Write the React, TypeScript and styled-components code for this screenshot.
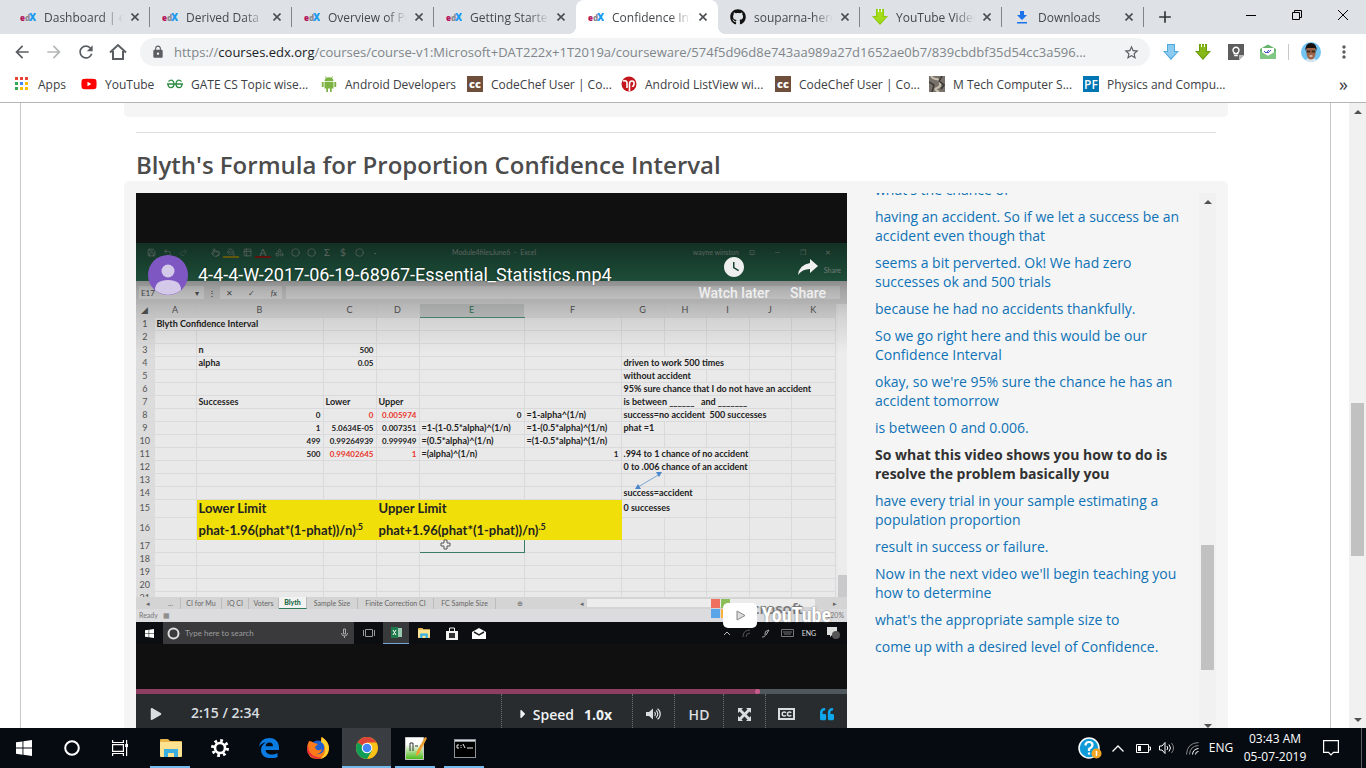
import React from "react";
import styled, { createGlobalStyle, css } from "styled-components";
import { MdArrowBack, MdArrowForward, MdRefresh, MdLock, MdStarBorder, MdMoreVert, MdAdd, MdWatchLater } from "react-icons/md";
import { FaGithub, FaYoutube, FaQuoteLeft, FaPlay, FaCaretRight } from "react-icons/fa";
import { Save, Undo2, Redo2, Pointer, PaintBucket, Table2, Shapes, Circle } from "lucide-react";

const ui = '"Open Sans", "Noto Sans", sans-serif';

const GlobalStyle = createGlobalStyle`
  * { box-sizing: border-box; }
  body { margin: 0; background: #fff; font-family: ${ui}; overflow: hidden; }
  button { border: 0; padding: 0; background: none; font: inherit; color: inherit; cursor: pointer; }
  a { color: inherit; text-decoration: none; }
  svg { display: block; flex: none; }
`;

const Screen = styled.div`
  display: flex;
  flex-direction: column;
  height: 100vh;
`;

/* ---------- browser chrome ---------- */

const TabStrip = styled.header`
  display: flex;
  height: 34px;
  padding-left: 8px;
  background: #dee1e6;
  flex: none;
`;

const Tab = styled.div<{ $active?: boolean; $line?: boolean }>`
  position: relative;
  display: flex;
  align-items: center;
  gap: 8px;
  flex: 0 1 142px;
  min-width: 0;
  padding: 0 11px 0 12px;
  color: #45494d;
  font-size: 12px;
  ${(p) => p.$line && css`
    &::after {
      content: "";
      position: absolute;
      right: 0;
      top: 7px;
      width: 1px;
      height: 20px;
      background: #808488;
    }
  `}
  ${(p) => p.$active && css`
    background: #fff;
    border-radius: 8px 8px 0 0;
    &::before, &::after {
      content: "";
      position: absolute;
      bottom: 0;
      width: 8px;
      height: 8px;
    }
    &::before { left: -8px; background: radial-gradient(circle at 0 0, #dee1e6 8px, #fff 8px); }
    &::after { right: -8px; background: radial-gradient(circle at 100% 0, #dee1e6 8px, #fff 8px); }
  `}
`;

const TabTitle = styled.span`
  flex: 1;
  min-width: 0;
  overflow: hidden;
  white-space: nowrap;
  mask-image: linear-gradient(90deg, #000 74%, transparent);
`;

const TabClose = styled.button`
  display: grid;
  place-items: center;
  width: 8px;
  height: 12px;
  color: #4b4f53;
`;

const NewTab = styled.button`
  width: 42px;
  display: grid;
  place-items: center;
  color: #333639;
  font-size: 20px;
`;

const WindowButtons = styled.div`
  display: flex;
  margin-left: auto;
  height: 29px;
`;

const WindowButton = styled.button`
  display: grid;
  place-items: center;
  width: 46px;
`;

const Toolbar = styled.nav`
  display: flex;
  align-items: center;
  height: 36px;
  padding: 0 12px 0 6px;
  flex: none;
  color: #5a5e62;
`;

const ToolButton = styled.button<{ $w?: number; $dim?: boolean }>`
  display: grid;
  place-items: center;
  width: ${(p) => p.$w ?? 32}px;
  height: 32px;
  font-size: 20px;
  flex: none;
  opacity: ${(p) => (p.$dim ? 0.45 : 1)};
`;

const AddressBox = styled.label`
  display: flex;
  align-items: center;
  flex: 1;
  min-width: 0;
  height: 28px;
  margin: 0 4px 0 6px;
  padding: 0 10px 0 11px;
  gap: 9px;
  border-radius: 14px;
  background: #f1f3f4;
  font-size: 13px;
`;

const Address = styled.span`
  flex: 1;
  min-width: 0;
  overflow: hidden;
  white-space: nowrap;
  color: #80868b;
  b { font-weight: 400; color: #202124; }
`;

const Rule = styled.span`
  width: 1px;
  height: 16px;
  margin: 0 12px 0 5px;
  background: #c6c9cc;
`;

const Bookmarks = styled.nav`
  display: flex;
  align-items: center;
  height: 33px;
  padding: 0 18px 4px 14px;
  border-bottom: 1px solid #b4b5b7;
  flex: none;
  font-size: 12px;
  color: #3c4043;
`;

const Bookmark = styled.a<{ $w: number }>`
  display: flex;
  align-items: center;
  gap: 8px;
  width: ${(p) => p.$w}px;
  flex: none;
  white-space: nowrap;
`;

const More = styled.button`
  margin-left: auto;
  font-size: 18px;
  line-height: 18px;
`;

/* ---------- course page ---------- */

const Viewport = styled.div`
  display: flex;
  flex: 1;
  min-height: 0;
  overflow: hidden;
`;

const Main = styled.main`
  flex: 1;
  min-width: 0;
  margin: 0 18px 0 20px;
  padding: 0 102px 0 103px;
  border: solid #c8c8c8;
  border-width: 0 1px;
`;

const PreviousBlock = styled.div`
  height: 14px;
  border-radius: 0 0 5px 5px;
  background: #f5f5f5;
`;

const Divider = styled.hr`
  height: 1px;
  margin: 15px 12px 16px;
  border: 0;
  background: #ddd;
`;

const Title = styled.h2`
  margin: 0 12px;
  font-size: 24px;
  line-height: 32px;
  font-weight: 600;
  color: #4c4c4c;
  white-space: nowrap;
`;

const VideoBlock = styled.section`
  display: flex;
  gap: 16px;
  padding: 12px;
  border-radius: 5px;
  background: #f5f5f5;
`;

const Player = styled.div`
  flex: 711 1 0;
  min-width: 0;
`;

const Stage = styled.div`
  position: relative;
  padding: 50px 0 45px;
  background: #101010;
  overflow: hidden;
`;

const Transcript = styled.aside`
  display: flex;
  flex: 353 1 0;
  min-width: 0;
  height: 541px;
  overflow: hidden;
`;

const Lines = styled.ol`
  flex: 1;
  margin: -13px 0 0;
  padding: 0 12px;
  list-style: none;
  font-size: 14px;
  line-height: 19px;
  color: #0e72b5;
`;

const Line = styled.li<{ $current?: boolean }>`
  margin-bottom: 8px;
  ${(p) => p.$current && css`
    color: #313131;
    font-weight: 700;
  `}
`;

const Track = styled.div`
  display: flex;
  flex-direction: column;
  align-items: center;
  width: 17px;
  flex: none;
  background: #f1f1f1;
`;

const Space = styled.span<{ $grow: number }>`
  flex: ${(p) => p.$grow} 1 0;
`;

const Gap = styled.span`
  width: 12px;
  flex: none;
`;

const Thumb = styled(Space)`
  width: 13px;
  background: #c1c1c1;
`;

const ArrowButton = styled.button`
  display: grid;
  place-items: center;
  width: 17px;
  height: 17px;
`;

/* ---------- player controls ---------- */

const Seek = styled.input`
  display: block;
  appearance: none;
  width: 100%;
  height: 5px;
  margin: 0;
  background: linear-gradient(90deg, #8e3e63 87%, #4f595d 87%);
  &::-webkit-slider-thumb {
    appearance: none;
    width: 5px;
    height: 5px;
    border-radius: 2px;
    background: #cb598d;
  }
`;

const Controls = styled.div`
  display: flex;
  height: 40px;
  background: #282c2e;
  color: #d8dee0;
  font-size: 14px;
  font-weight: 600;
`;

const Control = styled.button<{ $w: number; $line?: boolean; $color?: string }>`
  display: flex;
  align-items: center;
  justify-content: center;
  width: ${(p) => p.$w}px;
  flex: none;
  color: ${(p) => p.$color ?? "inherit"};
  border-left: ${(p) => (p.$line ? "1px dotted #6a6f72" : "0")};
`;

const Time = styled.span`
  flex: 1;
  padding-left: 15px;
  line-height: 38px;
`;

const Speed = styled(Control)`
  padding-right: 6px;
  font-weight: 700;
  color: #f0f3f4;
  gap: 3px;
  span { margin-right: 7px; font-weight: 600; }
`;

/* ---------- overlay of the embedded player ---------- */

const Shade = styled.div`
  position: absolute;
  inset: 50px 0 auto;
  height: 110px;
  background: linear-gradient(rgba(0,0,0,.6), rgba(0,0,0,.38) 36px, rgba(0,0,0,.24) 48px, rgba(0,0,0,.1) 75px, transparent);
`;

const ClipHeader = styled.div`
  position: absolute;
  inset: 62px 2px auto 12px;
  display: flex;
  font-family: Roboto, sans-serif;
  color: #f1f1f1;
`;

const ClipTitle = styled.a`
  flex: 1;
  margin-left: 10px;
  font-size: 18px;
  line-height: 40px;
  color: #fff;
  text-shadow: 0 0 2px rgba(0,0,0,.5);
  white-space: nowrap;
`;

const ClipAction = styled.button`
  display: flex;
  flex-direction: column;
  align-items: center;
  width: 74px;
  gap: 4px;
  font-size: 14px;
  font-weight: 500;
  line-height: 20px;
  color: #eee;
  white-space: nowrap;
`;

const Watermark = styled.a`
  position: absolute;
  right: 16px;
  bottom: 60px;
  display: flex;
  align-items: center;
  gap: 4px;
  color: #fff;
  font: 700 20px/28px "Liberation Sans Narrow", "Roboto Condensed", "Liberation Sans", sans-serif;
  text-shadow: 0 0 2px #666;
`;

const Sponsor = styled.div`
  position: absolute;
  right: 44px;
  bottom: 70px;
  display: flex;
  align-items: center;
  gap: 4px;
  color: #777;
  font: 600 15px/22px ${ui};
`;

/* ---------- recorded spreadsheet ---------- */

const Excel = styled.div`
  height: 401px;
  overflow: hidden;
  background: #e9e9e9;
  color: #222;
  font-family: Lato, sans-serif;
  font-size: 8px;
`;

const Ribbon = styled.div`
  height: 38px;
  background: #2e7a5a;
  color: #c3d4cc;
`;

const RibbonRow = styled.div`
  display: flex;
  align-items: center;
  height: 18px;
  padding: 0 6px 0 7px;
  white-space: nowrap;
  font-size: 7px;
`;

const QuickTools = styled.span`
  display: flex;
  width: 309px;
  font-size: 10px;
`;

const QuickTool = styled.span<{ $mark?: string }>`
  display: grid;
  place-items: center;
  width: 16px;
  height: 12px;
  box-shadow: ${(p) => (p.$mark ? `inset 0 -2px 0 -0px ${p.$mark}` : "none")};
  background-clip: content-box;
`;

const ClipWindowButtons = styled.span`
  display: flex;
  justify-content: space-around;
  width: 102px;
`;

const FormulaBar = styled.div`
  display: flex;
  align-items: center;
  gap: 4px;
  height: 23px;
  padding: 0 7px 0 3px;
  background: #d9d9d9;
`;

const Field = styled.span<{ $w?: number }>`
  display: flex;
  justify-content: space-between;
  align-items: center;
  width: ${(p) => (p.$w ? p.$w + "px" : "auto")};
  flex: ${(p) => (p.$w ? "none" : "1")};
  height: 13px;
  padding: 0 5px 0 2px;
  background: #ececec;
  color: #555;
`;

const SheetArea = styled.div`
  position: relative;
  display: flex;
  height: 293px;
  overflow: hidden;
`;

const Sheet = styled.table`
  flex: 1;
  width: 100%;
  table-layout: fixed;
  border-collapse: collapse;
  align-self: flex-start;
  th, td {
    height: 13px;
    padding: 0 2px;
    border: solid #dadadc;
    border-width: 0 1px 1px 0;
    line-height: 12px;
    white-space: nowrap;
    text-align: left;
    font-weight: 700;
    font-size: 9px;
  }
  th {
    padding: 0;
    background: #dcdcdc;
    color: #555;
    text-align: center;
    font-weight: 400;
  }
`;

const HeadCell = styled.th<{ $on?: boolean }>`
  && {
    height: 13px;
    ${(p) => p.$on && css`
      background: #c4c8c6;
      border-bottom: 1px solid #4f8f74;
      color: #2f7a58;
    `}
  }
`;

const Cell = styled.td<{ $right?: boolean; $red?: boolean; $big?: boolean; $selected?: boolean }>`
  && {
    ${(p) => p.$right && "text-align: right; font-size: 8px;"}
    ${(p) => p.$red && "color: #e8352b;"}
    ${(p) => p.$big && css`
      background: #f1df0a;
      border-color: #f1df0a;
      font-size: 13px;
      line-height: 17px;
      vertical-align: bottom;
    `}
    ${(p) => p.$selected && "border: 1px solid #3b7d63;"}
  }
  sup { font-size: 9px; line-height: 8px; }
`;

const SheetScroll = styled.div`
  width: 9px;
  margin-left: 2px;
  padding-bottom: 22px;
  background: #c9c9cb;
  span { display: block; height: 100%; background: #ececec; }
`;

const SheetOverlay = styled.svg`
  position: absolute;
  left: 300px;
  top: 165px;
`;

const SheetTabs = styled.div`
  display: flex;
  align-items: center;
  height: 12px;
  padding-left: 10px;
  background: #d4d4d4;
  color: #666;
  font-size: 7px;
  line-height: 11px;
  white-space: nowrap;
`;

const SheetTab = styled.span<{ $w: number; $on?: boolean }>`
  width: ${(p) => p.$w}px;
  flex: none;
  text-align: center;
  border-right: 1px solid #bcbcbc;
  ${(p) => p.$on && css`
    background: #f2f2f2;
    color: #1e6b48;
    font-weight: 900;
    border-bottom: 1px solid #2f7a58;
  `}
`;

const AddSheet = styled.span`
  width: 48px;
  text-align: center;
`;

const SheetSlider = styled.span`
  flex: 1;
  display: flex;
  align-items: center;
  gap: 3px;
  margin: 0 10px 0 36px;
  i { flex: 0 1 228px; height: 8px; background: #ececec; }
  span:last-child { margin-left: auto; }
`;

const Status = styled.div`
  display: flex;
  justify-content: space-between;
  height: 13px;
  padding: 0 3px;
  line-height: 13px;
  font-size: 7px;
  color: #777;
  background: #dcdcde;
`;

const ClipTaskbar = styled.div`
  display: flex;
  align-items: center;
  height: 22px;
  background: #0c0d11;
  color: #ddd;
`;

const ClipSearch = styled.span`
  display: flex;
  align-items: center;
  gap: 5px;
  width: 191px;
  height: 22px;
  padding: 0 6px 0 4px;
  background: #3a3a3c;
  color: #9c9c9c;
  span { flex: 1; }
`;

const ClipIcon = styled.span<{ $w: number; $on?: boolean }>`
  display: grid;
  place-items: center;
  width: ${(p) => p.$w}px;
  height: 22px;
  flex: none;
  font-size: 7px;
  ${(p) => p.$on && "background: #37393b; border-bottom: 1px solid #76a7d8;"}
`;

/* ---------- desktop task bar ---------- */

const Taskbar = styled.footer`
  display: flex;
  height: 40px;
  flex: none;
  background: #060b12;
  color: #fff;
`;

const TaskButton = styled.button<{ $w?: number; $open?: boolean; $active?: boolean }>`
  display: grid;
  place-items: center;
  align-content: center;
  position: relative;
  width: ${(p) => p.$w ?? 49}px;
  flex: none;
  ${(p) => p.$active && "background: #3a3d42;"}
  ${(p) => (p.$open || p.$active) && css`
    &::after {
      content: "";
      position: absolute;
      left: ${p.$active ? 0 : 4}px;
      right: ${p.$active ? 0 : 5}px;
      bottom: 0;
      height: 2px;
      background: #76b9ed;
    }
  `}
`;

const Apps = styled.div`
  display: flex;
  margin-left: 2px;
`;

const Tray = styled.div`
  display: flex;
  align-items: center;
  margin-left: auto;
  font-size: 12px;
`;

const TrayButton = styled.button<{ $w: number }>`
  display: grid;
  place-items: center;
  width: ${(p) => p.$w}px;
  height: 40px;
  line-height: 18px;
  white-space: nowrap;
`;

const ShowDesktop = styled.button`
  width: 5px;
  height: 40px;
  border-left: 1px solid #5b5f64;
`;

/* ---------- drawings ---------- */

const EdxIcon = () => (
  <svg width="16" height="16" viewBox="0 0 16 16" fontFamily="Open Sans, sans-serif" fontWeight="800">
    <text x="0" y="12" fontSize="8" fill="#b3145c">e</text>
    <text x="5" y="12" fontSize="8" fill="#8b8b90">d</text>
    <text x="9" y="12" fontSize="10" fill="#1d9bf0">X</text>
  </svg>
);

const CloseIcon = () => (
  <svg width="8" height="8" viewBox="0 0 8 8" stroke="currentColor" strokeWidth="1.600"><path d="m.5.5 7 7M7.500.5l-7 7" /></svg>
);

const DownArrow = ({ top, base, bar }: { top: string; base: string; bar?: boolean }) => (
  <svg width="16" height="16" viewBox="0 0 16 16">
    <path d="M4 0h8v7h4l-8 9-8-9h4z" fill={base} />
    <path d="M5 1h6v7h3l-6 6-6-6h3z" fill={top} />
    {bar && <path d="M6 0h1v3H6zM9 0h1v3H9z" fill="#fff" />}
  </svg>
);

const DownloadIcon = () => (
  <svg width="16" height="16" viewBox="0 0 16 16" fill="#1a73e8"><path d="M6 2h4v4h3l-5 5-5-5h3zM3 13h10v1.6H3z" /></svg>
);

const HomeIcon = () => (
  <svg width="18" height="18" viewBox="0 0 18 18" fill="none" stroke="currentColor" strokeWidth="2"><path d="M1 9.500 9 2l8 7.500M4 8v8h10V8" /></svg>
);

const AppsIcon = () => (
  <svg width="16" height="16" viewBox="0 0 16 16">
    {["#ea4335", "#ea4335", "#ea4335", "#34a853", "#4285f4", "#fbbc05", "#34a853", "#fbbc05", "#fbbc05"].map((c, i) => (
      <rect key={i} x={1 + (i % 3) * 5} y={1 + Math.floor(i / 3) * 5} width="3" height="3" fill={c} />
    ))}
  </svg>
);

const GeeksIcon = () => (
  <svg width="16" height="16" viewBox="0 0 16 16" fill="none" stroke="#2f8d46" strokeWidth="1.300">
    <path d="M0 8h16M1.500 5.500C4 3 7 4 7 8c0 4.500-5.500 5-6 .5M14.500 5.500C12 3 9 4 9 8c0 4.500 5.500 5 6 .5" />
  </svg>
);

const AndroidIcon = () => (
  <svg width="16" height="16" viewBox="0 0 16 16" fill="#7cb342">
    <path d="M3.500 5.200a4.500 4 0 0 1 9 0zM3.500 6h9v6.500h-1.800V16H9v-3.500H7V16H5.300v-3.500H3.500zM.8 6h1.900v5H.8zM13.300 6h1.900v5h-1.900z" />
    <path d="m4.500.5 1.200 2M11.500.5l-1.200 2" stroke="#7cb342" />
  </svg>
);

const ChefIcon = () => (
  <svg width="16" height="16" viewBox="0 0 16 16"><path d="M0 0h16v16H0z" fill="#6f4e3c" /><text x="8" y="12" textAnchor="middle" fill="#fff" fontFamily="Open Sans, sans-serif" fontWeight="800" fontSize="11">cc</text></svg>
);

const RedIcon = () => (
  <svg width="16" height="16" viewBox="0 0 16 16"><circle cx="8" cy="8" r="7.500" fill="#c4161c" /><path d="M2 5q4-1 4 2v5M8.500 15V8q0-3 2.500-3t2 3-2 2" fill="none" stroke="#fff" strokeWidth="1.600" /></svg>
);

const PhotoIcon = () => (
  <svg width="16" height="16" viewBox="0 0 16 16"><path d="M0 0h16v16H0z" fill="#77716a" /><path d="M2 0q2 3 5 3t4 4-3 5 2 4" fill="none" stroke="#c9bfae" strokeWidth="2" /><path d="M0 6l5 3-2 7M13 0l-3 5 5 4-3 4" fill="none" stroke="#3b3936" strokeWidth="1.500" /></svg>
);

const PfIcon = () => (
  <svg width="16" height="16" viewBox="0 0 16 16"><path d="M0 0h16v16H0z" fill="#0075b4" /><text x="8" y="13" textAnchor="middle" fill="#fff" fontFamily="Open Sans, sans-serif" fontWeight="600" fontSize="12">PF</text></svg>
);

const KeepIcon = () => (
  <svg width="16" height="16" viewBox="0 0 16 16"><path d="M0 0h16v11l-5 5H0z" fill="#5d5d5d" /><path d="M11 16v-5h5z" fill="#bbb" /><path d="M6.200 9.500V8.600a3 3 0 1 1 3.600 0v.9zM6.200 11.500h3.600" fill="none" stroke="#fff" strokeWidth="1.400" /></svg>
);

const MailIcon = () => (
  <svg width="16" height="16" viewBox="0 0 16 16"><path d="M0 5l8-4.500L16 5v9q0 1-1 1H1q-1 0-1-1z" fill="#68b36b" /><path d="M2 4h12v5l-6 3-6-3z" fill="#fff" /><path d="m4 7 2 2 3-3M7 8l1 1 3-3" fill="none" stroke="#4b54c4" /><path d="M0 7l8 5 8-5v7q0 1-1 1H1q-1 0-1-1z" fill="#81c784" /></svg>
);

const Avatar = () => (
  <svg width="20" height="20" viewBox="0 0 20 20"><defs><clipPath id="face"><circle cx="10" cy="10" r="10" /></clipPath></defs><g clipPath="url(#face)"><path d="M0 0h20v20H0z" fill="#72c5f2" /><path d="M3 20q2-4 7-4t7 4z" fill="#d9e6ee" /><path d="M5.500 6h9v6q-1 5.500-4.500 5.500T5.500 12z" fill="#9c6347" /><path d="M4.500 9Q4 1 10 1t5.500 8L14 6H6z" fill="#17120f" /><path d="M5.500 8.500h3.800v2H5.500zM10.700 8.500h3.800v2h-3.800z" fill="#3a2a24" /><path d="M8.500 14h3" stroke="#fff" /></g></svg>
);

const Triangle = ({ down }: { down?: boolean }) => (
  <svg width="8" height="4" viewBox="0 0 8 4"><path d={down ? "M0 0h8L4 4z" : "M4 0l4 4H0z"} fill="#505050" /></svg>
);

const WindowsLogo = ({ size = 16 }: { size?: number }) => (
  <svg width={size} height={size} viewBox="0 0 16 16" fill="#fff"><path d="M0 2.300 6.500 1.400v6.200H0zM7.400 1.200 16 0v7.600H7.400zM0 8.500h6.500v6.200L0 13.800zM7.400 8.500H16V16l-8.600-1.200z" /></svg>
);

const TaskViewIcon = () => (
  <svg width="16" height="16" viewBox="0 0 16 16" fill="none" stroke="#fff" strokeWidth="1.200"><path d="M.6 0v2.500h10.800V0M.6 16v-2.500h10.800V16M.6 4.600h10.800v6.800H.6zM14.600 0v16" /><path d="M13.200 4h2.800v3h-2.800z" fill="#fff" stroke="none" /></svg>
);

const FolderIcon = ({ size = 22 }: { size?: number }) => (
  <svg width={size} height={size} viewBox="0 0 22 22"><path d="M0 3q0-1 1-1h7l2 2h11q1 0 1 1v14H0z" fill="#e9b64a" /><path d="M0 5h22v14q0 1-1 1H1q-1 0-1-1z" fill="#fde391" /><path d="M4 20v-8h14v8h-4v-4H8v4z" fill="#3aaee0" /></svg>
);

const GearIcon = () => (
  <svg width="18" height="18" viewBox="0 0 18 18" fill="none" stroke="#fff"><circle cx="9" cy="9" r="5" strokeWidth="2.600" /><circle cx="9" cy="9" r="7.500" strokeWidth="3" strokeDasharray="2.700 3.190" /></svg>
);

const EdgeIcon = () => (
  <svg width="20" height="20" viewBox="0 0 20 20"><path d="M0 9C1 3 5 0 10.500 0 17 0 20 4.500 20 9.500V12H6.500c.3 3 3 4.500 6 4.500 2.200 0 4.200-.6 6-1.600v4c-2 1-4.300 1.400-6.700 1.400C6 20.300 2 17 2 12c0-3.500 2-6.200 5-7.500C4 4.600 1.500 6 0 9zm6.600-.8H14C14 6 12.800 4.500 10.500 4.500S6.900 6 6.600 8.200z" fill="#0a7be0" /></svg>
);

const FirefoxIcon = () => (
  <svg width="22" height="22" viewBox="0 0 22 22"><circle cx="11" cy="11.500" r="8" fill="#1f5fd0" /><path d="M2 4Q5 4 7 6l4 1-3 3q1 4 5 3l2-1q-1 5-6 5 7 1 8-5 1-5-3-8V0q8 4 8 11.500Q21.500 22 11 22T0 12Q0 8 2 4z" fill="#ff7a18" /><path d="M15 0q7 5 7 12-1 8-9 10 6-5 5-11-.5-4-4-6z" fill="#ffd02e" /><path d="M1 8q0 10 9 12 3 1 6 0-4 3-9 1Q0 18 0 12z" fill="#e8273f" /></svg>
);

const ChromeIcon = () => (
  <svg width="22" height="22" viewBox="0 0 22 22"><circle cx="11" cy="11" r="11" fill="#fbc116" /><path d="M11 11 1.500 5.500A11 11 0 0 1 20.500 5.500H11z" fill="#db4437" /><path d="M11 11 1.500 5.500A11 11 0 0 0 11 22l5-8.500z" fill="#0f9d58" /><circle cx="11" cy="11" r="5.300" fill="#fff" /><circle cx="11" cy="11" r="4.300" fill="#4285f4" /></svg>
);

const NotepadIcon = () => (
  <svg width="22" height="24" viewBox="0 0 22 24"><defs><linearGradient id="page" x2="0" y2="1"><stop offset=".3" stopColor="#fff" /><stop offset="1" stopColor="#48b812" /></linearGradient></defs><path d="M.5 1.500h18v22H.5z" fill="url(#page)" stroke="#c9c9c9" /><path d="M5 15V7h3v8M10 10h3M15 10h2" stroke="#333" fill="none" /><path d="m20 1 2 1-8 16-3 2 .5-4z" fill="#eda030" /></svg>
);

const TerminalIcon = () => (
  <svg width="22" height="19" viewBox="0 0 22 19"><path d="M0 0h22v19H0z" fill="#8e9499" /><path d="M1 3h20v15H1z" fill="#000" /><path d="M1 1h20v1H1z" fill="#d9dde0" /><path d="M5 6H3v3h2M7 6v1M7 8v1M9 5l2 4M13 9h6" stroke="#eee" fill="none" /></svg>
);

const VolumeIcon = () => (
  <svg width="15" height="12" viewBox="0 0 15 12"><path d="M0 4h3l4-3.500v11L3 8H0z" fill="currentColor" /><path d="M8.500 4.200a2.200 2.200 0 0 1 0 3.600M10 2.500a4.300 4.300 0 0 1 0 7M11.500.7a6.500 6.500 0 0 1 0 10.600" stroke="currentColor" fill="none" strokeWidth="1.200" /></svg>
);

const ExpandIcon = () => (
  <svg width="13" height="13" viewBox="0 0 13 13" fill="currentColor"><path d="M0 0h5L3.500 1.500l3 3 3-3L8 0h5v5l-1.500-1.500-3 3 3 3L13 8v5H8l1.500-1.500-3-3-3 3L5 13H0V8l1.500 1.500 3-3-3-3L0 5z" /></svg>
);

const CaptionIcon = () => (
  <svg width="17" height="12" viewBox="0 0 17 12" fill="none" stroke="currentColor"><path d="M1 1h15v10H1z" strokeWidth="2" /><path d="M8 4.800Q7.200 4 6.200 4 4.200 4 4.200 6t2 2q1 0 1.800-.8M13.300 4.800q-.8-.8-1.800-.8-2 0-2 2t2 2q1 0 1.800-.8" strokeWidth="1.500" /></svg>
);

const ShareArrow = () => (
  <svg width="20" height="24" viewBox="0 -2 20 24"><path d="M12 2l8 7-8 7v-4Q4 12 0 18q1-10 12-12z" fill="#f1f1f1" /></svg>
);

const UserCircle = () => (
  <svg width="40" height="40" viewBox="0 0 40 40"><circle cx="20" cy="20" r="20" fill="#7e57c2" /><circle cx="20" cy="16" r="6.500" fill="#d5c9ea" /><path d="M7 35q0-10 13-10t13 10a20 20 0 0 1-26 0z" fill="#d5c9ea" /></svg>
);

/* ---------- content ---------- */

const tabs = [
  { title: "Dashboard | edX", icon: <EdxIcon />, line: true },
  { title: "Derived Data | Derived", icon: <EdxIcon />, line: true },
  { title: "Overview of Power", icon: <EdxIcon />, line: true },
  { title: "Getting Started", icon: <EdxIcon /> },
  { title: "Confidence Interval", icon: <EdxIcon />, active: true },
  { title: "souparna-here", icon: <FaGithub size={16} color="#111" />, line: true },
  { title: "YouTube Video", icon: <DownArrow top="#a4dc1c" base="#8bc90c" bar />, line: true },
  { title: "Downloads", icon: <DownloadIcon />, line: true },
];

const bookmarks = [
  { w: 67, text: "Apps", icon: <AppsIcon /> },
  { w: 86, text: "YouTube", icon: <FaYoutube size={16} color="#f00" /> },
  { w: 154, text: "GATE CS Topic wise...", icon: <GeeksIcon /> },
  { w: 146, text: "Android Developers", icon: <AndroidIcon /> },
  { w: 154, text: "CodeChef User | Co...", icon: <ChefIcon /> },
  { w: 154, text: "Android ListView wi...", icon: <RedIcon /> },
  { w: 154, text: "CodeChef User | Co...", icon: <ChefIcon /> },
  { w: 154, text: "M Tech Computer S...", icon: <PhotoIcon /> },
  { w: 150, text: "Physics and Compu...", icon: <PfIcon /> },
];

const captions = [
  "what's the chance of",
  "having an accident. So if we let a success be an accident even though that",
  "seems a bit perverted. Ok! We had zero successes ok and 500 trials",
  "because he had no accidents thankfully.",
  "So we go right here and this would be our Confidence Interval",
  "okay, so we're 95% sure the chance he has an accident tomorrow",
  "is between 0 and 0.006.",
  "So what this video shows you how to do is resolve the problem basically you",
  "have every trial in your sample estimating a population proportion",
  "result in success or failure.",
  "Now in the next video we'll begin teaching you how to determine",
  "what's the appropriate sample size to",
  "come up with a desired level of Confidence.",
];
const currentCaption = 7;

const letters = "ABCDEFGHIJK".split("");
const columnWidths = [18, 42, 127, 53, 43, 105, 97, 43, 42, 43, 42];

type CellData = { c: string; t: React.ReactNode; span?: number; right?: boolean; red?: boolean; big?: boolean; selected?: boolean };
const r = (c: string, t: string, red = false): CellData => ({ c, t, right: true, red });

const sheet: Record<number, CellData[]> = {
  1: [{ c: "A", t: "Blyth Confidence Interval", span: 2 }],
  3: [{ c: "B", t: "n" }, r("C", "500")],
  4: [{ c: "B", t: "alpha" }, r("C", "0.05"), { c: "G", t: "driven to work 500 times", span: 3 }],
  5: [{ c: "G", t: "without accident", span: 2 }],
  6: [{ c: "G", t: "95% sure chance that I do not have an accident", span: 5 }],
  7: [{ c: "B", t: "Successes" }, { c: "C", t: "Lower" }, { c: "D", t: "Upper" }, { c: "G", t: "is between ______ \u00a0 and _______", span: 4 }],
  8: [r("B", "0"), r("C", "0", true), r("D", "0.005974", true), r("E", "0"), { c: "F", t: "=1-alpha^(1/n)" }, { c: "G", t: "success=no accident \u00a0500 successes", span: 4 }],
  9: [r("B", "1"), r("C", "5.0634E-05"), r("D", "0.007351"), { c: "E", t: "=1-(1-0.5*alpha)^(1/n)" }, { c: "F", t: "=1-(0.5*alpha)^(1/n)" }, { c: "G", t: "phat =1" }],
  10: [r("B", "499"), r("C", "0.99264939"), r("D", "0.999949"), { c: "E", t: "=(0.5*alpha)^(1/n)" }, { c: "F", t: "=(1-0.5*alpha)^(1/n)" }],
  11: [r("B", "500"), r("C", "0.99402645", true), r("D", "1", true), { c: "E", t: "=(alpha)^(1/n)" }, r("F", "1"), { c: "G", t: ".994 to 1 chance of no accident", span: 3 }],
  12: [{ c: "G", t: "0 to .006 chance of an accident", span: 3 }],
  14: [{ c: "G", t: "success=accident", span: 2 }],
  15: [{ c: "B", t: "Lower Limit", span: 2, big: true }, { c: "D", t: "Upper Limit", span: 3, big: true }, { c: "G", t: "0 successes", span: 2 }],
  16: [{ c: "B", t: <>phat-1.96(phat*(1-phat))/n)<sup>.5</sup></>, span: 2, big: true }, { c: "D", t: <>phat+1.96(phat*(1-phat))/n)<sup>.5</sup></>, span: 3, big: true }],
  17: [{ c: "E", t: "", selected: true }],
};

const rowHeight = (n: number) => (n === 15 ? 18 : n === 16 ? 22 : 13);

function SheetRow({ n }: { n: number }) {
  const cells: React.ReactNode[] = [];
  for (let i = 0; i < letters.length; ) {
    const d = sheet[n]?.find((x) => x.c === letters[i]);
    cells.push(
      <Cell key={i} colSpan={d?.span} $right={d?.right} $red={d?.red} $big={d?.big} $selected={d?.selected}>{d?.t}</Cell>
    );
    i += d?.span ?? 1;
  }
  return <tr style={{ height: rowHeight(n) }}><th scope="row">{n}</th>{cells}</tr>;
}

const SmallTools = () => (
  <QuickTools>
    <QuickTool><Save size={9} /></QuickTool>
    <QuickTool><Undo2 size={9} /></QuickTool>
    <QuickTool><Redo2 size={9} opacity={0.5} /></QuickTool>
    <QuickTool />
    <QuickTool><Pointer size={9} /></QuickTool>
    <QuickTool $mark="#c9b21c"><PaintBucket size={8} /></QuickTool>
    <QuickTool><Table2 size={9} /></QuickTool>
    <QuickTool $mark="#c22a1c">A</QuickTool>
    <QuickTool><Shapes size={9} /></QuickTool>
    <QuickTool><Circle size={9} /></QuickTool>
    <QuickTool><Circle size={9} /></QuickTool>
    <QuickTool>Σ</QuickTool>
    <QuickTool>$</QuickTool>
    <QuickTool><Circle size={9} /></QuickTool>
    <QuickTool>·</QuickTool>
  </QuickTools>
);

function Recording() {
  return (
    <Excel>
      <Ribbon>
        <RibbonRow>
          <SmallTools />
          <span>Module4filesJune6 &nbsp;-&nbsp; Excel</span>
          <Space $grow={1} />
          <span>wayne winston</span>
          <ClipWindowButtons><span>⊡</span><span>—</span><span>❐</span><span>✕</span></ClipWindowButtons>
        </RibbonRow>
        <RibbonRow><Space $grow={1} /><span>Share</span></RibbonRow>
      </Ribbon>
      <FormulaBar>
        <Field $w={65}><span>E17</span><span>▾</span></Field>
        <span>⋮</span>
        <Field $w={62}><span>&nbsp; ✕</span><span>✓</span><i>fx</i></Field>
        <Field />
      </FormulaBar>
      <SheetArea>
        <Sheet>
          <colgroup>{columnWidths.map((w, i) => <col key={i} width={w} />)}<col /></colgroup>
          <thead><tr><HeadCell>◢</HeadCell>{letters.map((l) => <HeadCell key={l} $on={l === "E"} scope="col">{l}</HeadCell>)}</tr></thead>
          <tbody>{Array.from({ length: 21 }, (_, i) => <SheetRow key={i} n={i + 1} />)}</tbody>
        </Sheet>
        <SheetScroll><span /></SheetScroll>
        <SheetOverlay width="240" height="90" viewBox="0 0 240 90">
          <path d="M202 18 224 5" stroke="#7ba7d6" />
          <path d="M199 20l3-5 3 5zM220 3h6l-3 5z" fill="#4a86c8" />
          <path d="M8 71h3v3h3v3h-3v3H8v-3H5v-3h3z" fill="#eee" stroke="#555" />
        </SheetOverlay>
      </SheetArea>
      <SheetTabs>
        <span>◂</span>
        <SheetTab $w={31}>&nbsp; &nbsp; &nbsp; ...</SheetTab>
        <SheetTab $w={41}>CI for Mu</SheetTab>
        <SheetTab $w={27}>IQ CI</SheetTab>
        <SheetTab $w={30}>Voters</SheetTab>
        <SheetTab $w={28} $on>Blyth</SheetTab>
        <SheetTab $w={51}>Sample Size</SheetTab>
        <SheetTab $w={76}>Finite Correction CI</SheetTab>
        <SheetTab $w={62}>FC Sample Size</SheetTab>
        <AddSheet>⊕</AddSheet>
        <SheetSlider><span>◂</span><i /><span>▸</span></SheetSlider>
      </SheetTabs>
      <Status><span>Ready &nbsp; ▦</span><span>120%</span></Status>
      <ClipTaskbar>
        <ClipIcon $w={27}><WindowsLogo size={9} /></ClipIcon>
        <ClipSearch>
          <svg width="13" height="13" viewBox="0 0 13 13" fill="none" stroke="#ddd" strokeWidth="2"><circle cx="6.500" cy="6.500" r="5" /></svg>
          <span>Type here to search</span>
          <svg width="7" height="10" viewBox="0 0 7 10" fill="none" stroke="#aaa"><path d="M2.500 1h2v5h-2zM.5 5q0 3 3 3t3-3M3.500 8v2" /></svg>
        </ClipSearch>
        <ClipIcon $w={29}><svg width="12" height="8" viewBox="0 0 12 8" fill="none" stroke="#999"><path d="M2.500.5h7v7h-7zM.5 1v6M11.500 1v6" /></svg></ClipIcon>
        <ClipIcon $w={26} $on><svg width="11" height="11" viewBox="0 0 11 11"><path d="M0 0h7v11H0z" fill="#1f7a4c" /><path d="M7 1h4v9H7z" fill="#9cc9b1" /><path d="m2 3 3 5M5 3 2 8" stroke="#fff" /></svg></ClipIcon>
        <ClipIcon $w={29}><FolderIcon size={12} /></ClipIcon>
        <ClipIcon $w={27}><svg width="12" height="13" viewBox="0 0 12 13"><path d="M0 4h12v9H0z" fill="#f3f3f3" /><path d="M3.500 4V1h5v3" stroke="#f3f3f3" fill="none" /><path d="M3 6h6v5H3z" fill="#333" /></svg></ClipIcon>
        <ClipIcon $w={28}><svg width="14" height="11" viewBox="0 0 14 11"><path d="m0 4 7-4 7 4v7H0z" fill="#fff" /><path d="m2 4 5 3 5-3" stroke="#222" fill="none" strokeWidth="1.500" /></svg></ClipIcon>
        <Space $grow={1} />
        <ClipIcon $w={20}><svg width="8" height="5" viewBox="0 0 8 5" fill="none" stroke="#bbb"><path d="m1 4 3-3 3 3" /></svg></ClipIcon>
        <ClipIcon $w={18}><svg width="8" height="8" viewBox="0 0 8 8" fill="none" stroke="#555"><path d="M1 8q0-7 7-7M4 8q0-4 4-4" /></svg></ClipIcon>
        <ClipIcon $w={20}><svg width="9" height="9" viewBox="0 0 9 9" fill="none" stroke="#aaa"><path d="M1 8q4 0 3-3t4-4L5 6" /></svg></ClipIcon>
        <ClipIcon $w={24}><svg width="13" height="8" viewBox="0 0 13 8" fill="none" stroke="#777"><path d="M.5.5h12v7H.5zM2 3h9M3 5h7" /></svg></ClipIcon>
        <ClipIcon $w={20}>ENG</ClipIcon>
        <ClipIcon $w={28}><svg width="13" height="12" viewBox="0 0 13 12"><path d="M0 0h10v8H5l-2 2V8H0z" fill="#ddd" /><circle cx="9" cy="8" r="4" fill="#555" /></svg></ClipIcon>
      </ClipTaskbar>
    </Excel>
  );
}

export default function App() {
  return (
    <Screen>
      <GlobalStyle />
      <TabStrip>
        {tabs.map((t) => (
          <Tab key={t.title} $active={t.active} $line={t.line}>
            {t.icon}
            <TabTitle>{t.title}</TabTitle>
            <TabClose aria-label={"Close " + t.title}><CloseIcon /></TabClose>
          </Tab>
        ))}
        <NewTab aria-label="New tab"><MdAdd /></NewTab>
        <WindowButtons>
          <WindowButton aria-label="Minimize"><svg width="10" height="10" viewBox="0 0 10 10" stroke="#000"><path d="M0 5.500h10" /></svg></WindowButton>
          <WindowButton aria-label="Restore"><svg width="10" height="10" viewBox="0 0 10 10" stroke="#000" fill="none"><path d="M.5 2.500h7v7h-7zM2.500 2.500v-2h7v7h-2" /></svg></WindowButton>
          <WindowButton aria-label="Close"><svg width="10" height="10" viewBox="0 0 10 10" stroke="#000"><path d="m0 0 10 10M10 0 0 10" /></svg></WindowButton>
        </WindowButtons>
      </TabStrip>
      <Toolbar>
        <ToolButton aria-label="Back"><MdArrowBack /></ToolButton>
        <ToolButton aria-label="Forward" $dim><MdArrowForward /></ToolButton>
        <ToolButton aria-label="Reload"><MdRefresh /></ToolButton>
        <ToolButton aria-label="Home"><HomeIcon /></ToolButton>
        <AddressBox>
          <MdLock size={14} />
          <Address>https://<b>courses.edx.org</b>/courses/course-v1:Microsoft+DAT222x+1T2019a/courseware/574f5d96d8e743aa989a27d1652ae0b7/839cbdbf35d54cc3a596...</Address>
          <MdStarBorder size={17} />
        </AddressBox>
        <ToolButton $w={33} aria-label="Download manager"><DownArrow top="#8ccbf0" base="#4fa8e0" /></ToolButton>
        <ToolButton $w={32} aria-label="Video downloader"><DownArrow top="#86b817" base="#6a9d0c" bar /></ToolButton>
        <ToolButton $w={33} aria-label="Keep"><KeepIcon /></ToolButton>
        <ToolButton $w={31} aria-label="Mail tracker"><MailIcon /></ToolButton>
        <Rule />
        <ToolButton $w={20} aria-label="Profile"><Avatar /></ToolButton>
        <Gap />
        <ToolButton $w={21} aria-label="Menu"><MdMoreVert /></ToolButton>
      </Toolbar>
      <Bookmarks>
        {bookmarks.map((b, i) => <Bookmark key={i} href="#" $w={b.w}>{b.icon}<span>{b.text}</span></Bookmark>)}
        <More aria-label="More bookmarks">»</More>
      </Bookmarks>

      <Viewport>
        <Main>
          <PreviousBlock />
          <Divider />
          <Title>Blyth's Formula for Proportion Confidence Interval</Title>
          <VideoBlock>
            <Player>
              <Stage>
                <Recording />
                <Shade />
                <ClipHeader>
                  <UserCircle />
                  <ClipTitle href="#">4-4-4-W-2017-06-19-68967-Essential_Statistics.mp4</ClipTitle>
                  <ClipAction><MdWatchLater size={24} /><span>Watch later</span></ClipAction>
                  <ClipAction><ShareArrow /><span>Share</span></ClipAction>
                </ClipHeader>
                <Sponsor>
                  <svg width="19" height="19" viewBox="0 0 19 19"><path d="M0 0h9v9H0z" fill="#f0705f" /><path d="M10 0h9v9h-9z" fill="#8cbf5a" /><path d="M0 10h9v9H0z" fill="#5aa5e8" /><path d="M10 10h9v9h-9z" fill="#f7b13c" /></svg>
                  Microsoft
                </Sponsor>
                <Watermark href="#">
                  <svg width="34" height="25" viewBox="0 0 34 25"><rect width="34" height="25" rx="5" fill="#fff" /><path d="m14 8 8 4.500-8 4.500z" fill="#ddd" stroke="#888" /></svg>
                  YouTube
                </Watermark>
              </Stage>
              <Seek type="range" min={0} max={154} defaultValue={135} aria-label="Video position" />
              <Controls>
                <Control $w={40} aria-label="Play"><FaPlay size={12} /></Control>
                <Time>2:15 / 2:34</Time>
                <Speed $w={131} $line><FaCaretRight size={14} /><span>Speed</span>1.0x</Speed>
                <Control $w={42} $line aria-label="Volume"><VolumeIcon /></Control>
                <Control $w={49} $line>HD</Control>
                <Control $w={42} $line aria-label="Full screen"><ExpandIcon /></Control>
                <Control $w={42} $line aria-label="Captions"><CaptionIcon /></Control>
                <Control $w={40} $color="#0ea6ec" aria-label="Transcript"><FaQuoteLeft size={14} /></Control>
              </Controls>
            </Player>
            <Transcript>
              <Lines>
                {captions.map((c, i) => <Line key={i} $current={i === currentCaption}>{c}</Line>)}
              </Lines>
              <Track>
                <ArrowButton aria-label="Scroll transcript up"><Triangle /></ArrowButton>
                <Space $grow={335} /><Thumb $grow={125} /><Space $grow={47} />
                <ArrowButton aria-label="Scroll transcript down"><Triangle down /></ArrowButton>
              </Track>
            </Transcript>
          </VideoBlock>
        </Main>
        <Track>
          <ArrowButton aria-label="Scroll up"><Triangle /></ArrowButton>
          <Space $grow={283} /><Thumb $grow={153} /><Space $grow={155} />
          <ArrowButton aria-label="Scroll down"><Triangle down /></ArrowButton>
        </Track>
      </Viewport>

      <Taskbar>
        <TaskButton $w={48} aria-label="Start"><WindowsLogo /></TaskButton>
        <TaskButton $w={48} aria-label="Search"><svg width="16" height="16" viewBox="0 0 16 16" fill="none" stroke="#fff" strokeWidth="2"><circle cx="8" cy="8" r="6.800" /></svg></TaskButton>
        <TaskButton $w={48} aria-label="Task view"><TaskViewIcon /></TaskButton>
        <Apps>
          <TaskButton $open aria-label="File Explorer"><FolderIcon /></TaskButton>
          <TaskButton aria-label="Settings"><GearIcon /></TaskButton>
          <TaskButton aria-label="Edge"><EdgeIcon /></TaskButton>
          <TaskButton aria-label="Firefox"><FirefoxIcon /></TaskButton>
          <TaskButton $active aria-label="Chrome"><ChromeIcon /></TaskButton>
          <TaskButton $open aria-label="Notepad++"><NotepadIcon /></TaskButton>
          <TaskButton $open aria-label="Command Prompt"><TerminalIcon /></TaskButton>
        </Apps>
        <Tray>
          <TrayButton $w={30} aria-label="Help"><svg width="24" height="22" viewBox="0 0 24 22"><circle cx="11" cy="11" r="10" fill="#0f9ad8" stroke="#fff" strokeWidth="1.500" /><path d="M7.500 8.500Q7.500 5 11 5t3.500 3q0 2-3.500 4v2M11 15.500v2" stroke="#fff" strokeWidth="2.200" fill="none" /><circle cx="18.500" cy="16.500" r="5" fill="#f5a623" /><path d="M18.500 14v5" stroke="#fff" strokeWidth="1.500" /></svg></TrayButton>
          <TrayButton $w={26} aria-label="Hidden icons"><svg width="12" height="7" viewBox="0 0 12 7" fill="none" stroke="#fff" strokeWidth="1.300"><path d="m.5 6.500 5.500-5.500 5.500 5.500" /></svg></TrayButton>
          <TrayButton $w={24} aria-label="Battery"><svg width="15" height="9" viewBox="0 0 15 9" fill="none" stroke="#fff"><path d="M.5.5h12v8H.5zM13 3h1.500v3H13" /><path d="M2 2h3v5H2z" fill="#fff" stroke="none" /></svg></TrayButton>
          <TrayButton $w={24} aria-label="Volume"><svg width="16" height="14" viewBox="0 0 16 14" fill="none" stroke="#fff"><path d="M.5 5h2.500l3-3.500v11L3 9H.5zM8 5q1.500 2 0 4M10 3.500q3 3.500 0 7" /><path d="M12.500 2q4 5 0 10" stroke="#888" /></svg></TrayButton>
          <TrayButton $w={26} aria-label="Network"><svg width="13" height="13" viewBox="0 0 13 13" fill="none" stroke="#888"><path d="M.5 12.500Q1 1 12.500.5M3.500 12.500Q4 4 12.500 3.500" /><path d="M6.500 12.500Q7 7 12.500 6.500M9.500 12.500q0-3 3-3" stroke="#fff" /></svg></TrayButton>
          <TrayButton $w={32}>ENG</TrayButton>
          <TrayButton $w={76}><span>03:43 AM<br />05-07-2019</span></TrayButton>
          <TrayButton $w={36} aria-label="Notifications"><svg width="16" height="16" viewBox="0 0 16 16" fill="none" stroke="#fff" strokeWidth="1.200"><path d="M.6.600h14.800v11.800H10.500L8 15l-2.500-2.600H.6z" /></svg></TrayButton>
          <Gap />
          <ShowDesktop aria-label="Show desktop" />
        </Tray>
      </Taskbar>
    </Screen>
  );
}
